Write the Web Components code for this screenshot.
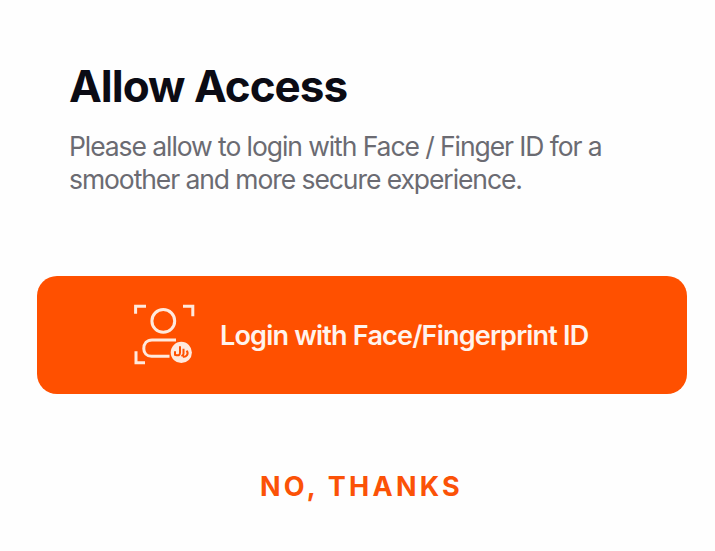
<!DOCTYPE html>
<html lang="en"><head><meta charset="utf-8"><title>Allow Access</title>
<style>body{margin:0;background:#fefefe;font-family:Inter,"Liberation Sans",sans-serif}</style></head>
<body><access-sheet></access-sheet>
<script>
class AccessHeading extends HTMLElement{constructor(){super();this.attachShadow({mode:'open'}).innerHTML=`
<style>:host{display:block;padding:0 32px}
h1{margin:0;font-size:44px;line-height:54px;font-weight:700;color:#0b0b14;white-space:nowrap}
h1 span,p span{display:block;width:max-content}
h1 span{letter-spacing:-1px}
p{margin:17px 0 0;font-size:26.5px;line-height:33px;color:#6b6b72;letter-spacing:-1.08px;white-space:nowrap}</style>
<h1><span>Allow Access</span></h1><p><span>Please allow to login with Face / Finger ID for a</span><span>smoother and more secure experience.</span></p>`}}
customElements.define('access-heading',AccessHeading);
class FaceIcon extends HTMLElement{constructor(){super();this.attachShadow({mode:'open'}).innerHTML=`
<style>:host{display:block;width:62px;height:62px}svg{display:block}</style>
<svg width="62" height="62" viewBox="0 0.8 62 62" fill="none" stroke="#ffe9dd" stroke-width="3">
<path d="M2.6 10.5V3H13M50 3H59.8V13M3 48V59.5H12"/><circle cx="30.3" cy="17.7" r="11.4"/>
<path d="M36.5 53H18.5C13.5 53 10.8 49.8 10.8 45.5C10.8 40.2 14 36.7 19 36.7H43"/><circle cx="48.3" cy="49.2" r="10.6" fill="#ffe9dd" stroke="none"/>
<path d="M47 43V49.5Q47 53.5 42 51.5V48M50.5 45.5V50.5Q50.5 52 48.5 53M53.5 47.5Q55.5 49.5 54 52Q52.5 54 50 53.5" stroke="#ff5000" stroke-width="2"/></svg>`}}
customElements.define('face-icon',FaceIcon);
class LoginButton extends HTMLElement{constructor(){super();this.attachShadow({mode:'open'}).innerHTML=`
<style>:host{display:block}button{all:unset;box-sizing:border-box;width:650px;height:118px;border-radius:20px;background:#ff5000;color:#fff3ed;display:flex;align-items:center;padding-left:96px;gap:25px;font-size:27px;font-weight:600;letter-spacing:-.8px;white-space:nowrap}</style>
<button><face-icon></face-icon><slot></slot></button>`}}
customElements.define('login-button',LoginButton);
class TextButton extends HTMLElement{constructor(){super();this.attachShadow({mode:'open'}).innerHTML=`
<style>:host{display:flex}button{all:unset;color:#fb5207;font-size:27px;line-height:34px;font-weight:700;letter-spacing:3.25px;white-space:nowrap}</style><button><slot></slot></button>`}}
customElements.define('text-button',TextButton);
class AccessSheet extends HTMLElement{constructor(){super();this.attachShadow({mode:'open'}).innerHTML=`
<style>:host{display:block;box-sizing:border-box;height:551px;padding:59px 28px 0 37px}login-button{margin-top:80px}text-button{margin-top:76px;padding-left:223px}</style>
<access-heading></access-heading><login-button>Login with Face/Fingerprint ID</login-button><text-button>NO, THANKS</text-button>`}}
customElements.define('access-sheet',AccessSheet);
</script></body></html>
